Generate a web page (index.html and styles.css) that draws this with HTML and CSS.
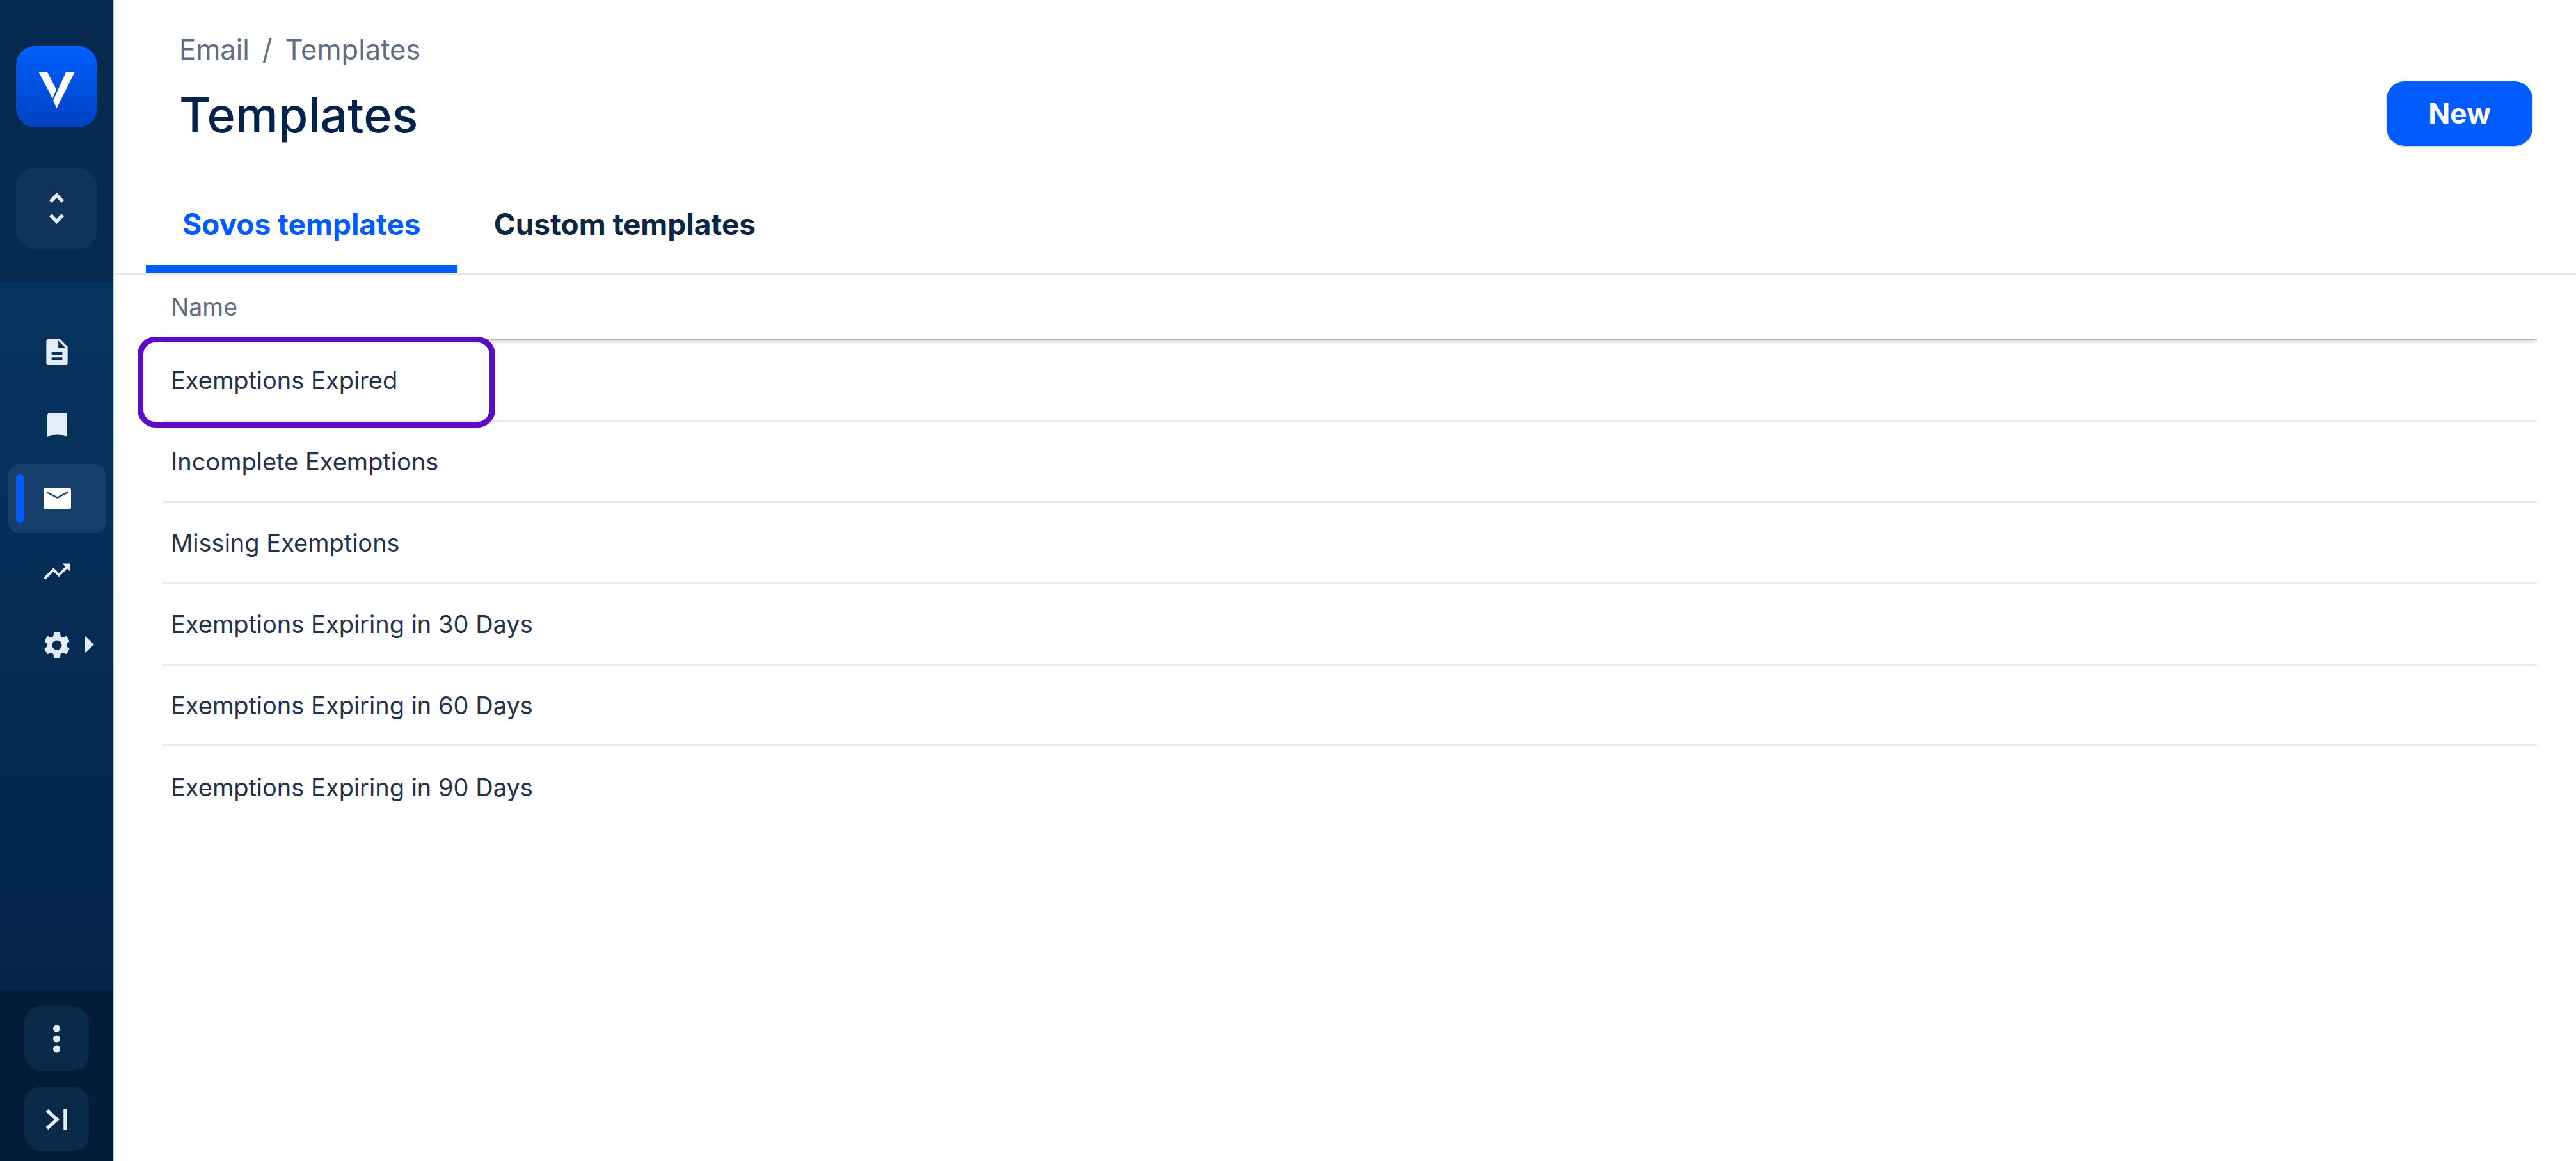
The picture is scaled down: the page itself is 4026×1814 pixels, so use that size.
FILE: index.html
```html
<!DOCTYPE html>
<html lang="en">
<head>
  <meta charset="UTF-8">
  <meta name="viewport" content="width=device-width,initial-scale=1.0">
  <title>Templates</title>
  <link rel="stylesheet" href="styles.css">
</head>
<body>
  <div class="app">
    <!-- sidebar -->
    <aside class="sidebar">
      <div class="side-top">
        <div class="logo">
          <svg viewBox="0 0 127 127" width="127" height="127">
            <polygon fill="#fff" points="35.7,40.7 49,40.7 63,68 57,82"/>
            <polygon fill="#fff" points="78,40.7 91.7,40.7 63.5,97 58,85"/>
          </svg>
        </div>
        <div class="stepper">
          <svg viewBox="0 0 127 127" width="127" height="127" fill="none" stroke="#e3ecf9" stroke-width="5.5">
            <path d="M54 53 L63.5 43 L73 53"/>
            <path d="M54 74 L63.5 84 L73 74"/>
          </svg>
        </div>
      </div>

      <nav class="side-nav">
        <a class="nav-item">
          <svg viewBox="0 0 24 24" width="50" height="50" fill="#e3ecf9"><path d="M14 2H6c-1.1 0-2 .9-2 2v16c0 1.1.9 2 2 2h12c1.100 0 2-.9 2-2V8l-6-6zm2 16H8v-2h8v2zm0-4H8v-2h8v2zm-3-5V3.500L18.500 9H13z"/></svg>
        </a>
        <a class="nav-item">
          <svg viewBox="0 0 31 38" width="31" height="38" fill="#e3ecf9"><path d="M4 0h23c2.200 0 4 1.800 4 4v34c-5-3-10-4.500-15.500-4.500S5 35 0 38V4c0-2.200 1.800-4 4-4z"/></svg>
        </a>
        <a class="nav-item active">
          <span class="nav-marker"></span>
          <svg viewBox="0 0 43 34" width="43" height="34">
            <rect width="43" height="34" rx="4" fill="#fff"/>
            <path d="M5 7 L21.500 15.500 L38 7" fill="none" stroke="#163e6b" stroke-width="2.500"/>
          </svg>
        </a>
        <a class="nav-item">
          <svg viewBox="0 0 24 24" width="50" height="50" fill="#e3ecf9"><path d="M16 6l2.290 2.290-4.880 4.880-4-4L2 16.590 3.410 18l6-6 4 4 6.300-6.290L22 12V6z"/></svg>
        </a>
        <a class="nav-item">
          <svg class="gear" viewBox="0 0 24 24" width="50" height="50" fill="#e3ecf9"><path d="M19.140 12.940c.04-.3.060-.61.060-.94 0-.32-.02-.64-.07-.94l2.030-1.580a.49.49 0 0 0 .12-.61l-1.920-3.320a.488.488 0 0 0-.59-.22l-2.390.96c-.5-.38-1.030-.7-1.620-.94l-.36-2.540a.484.484 0 0 0-.48-.41h-3.840c-.24 0-.43.170-.47.410l-.36 2.540c-.59.240-1.130.570-1.620.940l-2.390-.96c-.22-.08-.47 0-.59.220L2.740 8.870c-.12.210-.08.470.12.610l2.030 1.580c-.05.300-.09.630-.09.940s.02.640.07.940l-2.030 1.580a.49.49 0 0 0-.12.610l1.920 3.320c.12.220.37.290.59.220l2.390-.96c.5.380 1.030.700 1.620.940l.36 2.540c.05.240.24.410.48.410h3.840c.24 0 .44-.17.47-.41l.36-2.540c.59-.24 1.130-.56 1.620-.94l2.390.96c.22.080.47 0 .59-.22l1.920-3.320c.12-.22.070-.47-.12-.61l-2.010-1.580zM12 15.600c-1.980 0-3.600-1.620-3.600-3.600s1.620-3.600 3.600-3.600 3.600 1.620 3.600 3.600-1.620 3.600-3.600 3.600z"/></svg>
          <span class="nav-caret"></span>
        </a>
      </nav>

      <div class="side-foot">
        <div class="foot-btn">
          <svg viewBox="0 0 101 101" width="101" height="101" fill="#e3ecf9">
            <circle cx="50.500" cy="35" r="5.500"/>
            <circle cx="50.500" cy="51" r="5.500"/>
            <circle cx="50.500" cy="67" r="5.500"/>
          </svg>
        </div>
        <div class="foot-btn">
          <svg viewBox="0 0 101 101" width="101" height="101" fill="none" stroke="#e3ecf9" stroke-width="5.500">
            <path d="M35.500 37 L51 51 L35.500 65"/>
            <path d="M64 35 V68"/>
          </svg>
        </div>
      </div>
    </aside>

    <!-- main -->
    <main class="main">
      <header class="page-head">
        <div>
          <div class="crumbs"><span>Email</span><span>/</span><span>Templates</span></div>
          <h1>Templates</h1>
        </div>
        <button class="btn-new">New</button>
      </header>

      <div class="tabs">
        <a class="tab active">Sovos templates</a>
        <a class="tab">Custom templates</a>
      </div>

      <div class="list">
        <div class="list-head">Name</div>
        <div class="list-row first">Exemptions Expired<span class="callout"></span></div>
        <div class="list-row">Incomplete Exemptions</div>
        <div class="list-row">Missing Exemptions</div>
        <div class="list-row">Exemptions Expiring in 30 Days</div>
        <div class="list-row">Exemptions Expiring in 60 Days</div>
        <div class="list-row last">Exemptions Expiring in 90 Days</div>
      </div>
    </main>
  </div>
</body>
</html>
```

FILE: styles.css
```css
* {
  box-sizing: border-box;
}
body {
  margin: 0;
  background: #fff;
  font-family: 'Inter', 'Liberation Sans', sans-serif;
  color: #22324d;
}
.app {
  display: flex;
  height: 100vh;
  overflow: hidden;
}

/* sidebar */
.sidebar {
  width: 178px;
  flex: none;
  display: flex;
  flex-direction: column;
  border-right: 1px solid #b4c6de;
  background: #05294f;
}
.side-top {
  height: 440px;
  padding: 72px 0 0 25px;
  display: flex;
  flex-direction: column;
  gap: 63px;
}
.logo, .stepper {
  width: 127px;
  height: 127px;
  border-radius: 30px;
}
.logo {
  background: linear-gradient(180deg, #0060ff, #0142c0);
}
.stepper {
  background: #10335a;
}
.side-nav {
  flex: 1;
  padding: 56px 12px 0 13px;
  display: flex;
  flex-direction: column;
  gap: 7px;
  background: linear-gradient(180deg, #07335f, #05244a);
}
.nav-item {
  position: relative;
  height: 107.500px;
  display: flex;
  align-items: center;
  justify-content: center;
  border-radius: 16px;
}
.nav-item.active {
  background: #163e6b;
}
.nav-marker {
  position: absolute;
  left: 12px;
  top: 16px;
  width: 13px;
  height: 76px;
  border-radius: 7px;
  background: #005cff;
}
.nav-caret {
  position: absolute;
  left: 120px;
  top: 40px;
  border-left: 14px solid #e3ecf9;
  border-top: 13.500px solid transparent;
  border-bottom: 13.500px solid transparent;
}
.side-foot {
  height: 267px;
  padding: 25px 0 0 38px;
  display: flex;
  flex-direction: column;
  gap: 25px;
  background: #021c3a;
}
.foot-btn {
  width: 101px;
  height: 101px;
  border-radius: 26px;
  background: #0a2a4a;
}
.foot-btn svg, .logo svg, .stepper svg {
  display: block;
}

/* main */
.main {
  flex: 1;
  min-width: 0;
}
.page-head {
  height: 248px;
  padding: 52px 68px 0 102px;
  display: flex;
  justify-content: space-between;
  align-items: flex-start;
}
.crumbs {
  display: flex;
  gap: 20px;
  font-size: 43.500px;
  line-height: 50px;
  color: #5e6d84;
}
h1 {
  margin: 30px 0 0;
  font-size: 75.500px;
  line-height: 96px;
  font-weight: 500;
  color: #05234a;
}
.btn-new {
  margin-top: 75px;
  width: 228px;
  height: 101px;
  padding-bottom: 3px;
  border: 0;
  border-radius: 28px;
  background: #005cff;
  color: #fff;
  font-family: inherit;
  font-size: 44.500px;
  font-weight: 700;
  box-shadow: 0 1px 3px rgba(0, 0, 0, 0.25);
}
.tabs {
  display: flex;
  height: 181px;
  padding-left: 50px;
  border-bottom: 3px solid #e6e8eb;
}
.tab {
  height: 179px;
  padding: 75px 57px 0;
  font-size: 46px;
  line-height: 54px;
  font-weight: 700;
  color: #0b2545;
}
.tab.active {
  color: #005cff;
  border-bottom: 13px solid #005cff;
}
.list {
  margin: 0 61px 0 76px;
}
.list-head {
  height: 103px;
  padding-left: 13px;
  display: flex;
  align-items: center;
  font-size: 37.500px;
  color: #5e6d84;
  border-bottom: 3px solid #bbbbbb;
  box-shadow: 0 6px 5px -3px rgba(0, 0, 0, 0.14);
}
.list-row {
  position: relative;
  height: 126.900px;
  padding-left: 13px;
  display: flex;
  align-items: center;
  font-size: 38px;
  border-bottom: 3px solid #e8eaed;
}
.list-row.last {
  border-bottom: 0;
}
.callout {
  position: absolute;
  left: -39px;
  top: -6px;
  width: 559px;
  height: 142px;
  border: 9px solid #5c0cc4;
  border-radius: 28px;
}
```
